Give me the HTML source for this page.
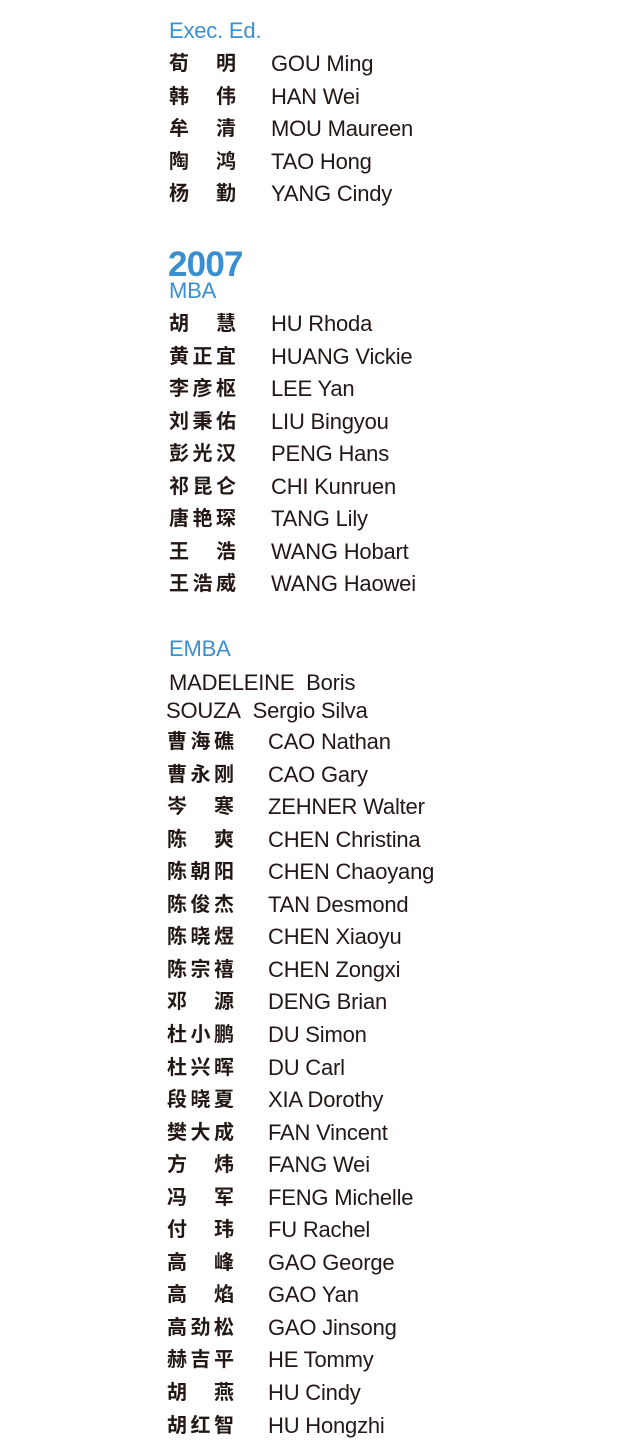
<!DOCTYPE html>
<html><head><meta charset="utf-8"><style>
body{margin:0;width:640px;height:1439px;background:#fff;position:relative;overflow:hidden;font-family:"Liberation Sans","Noto Sans CJK SC",sans-serif;color:#231815}
.r{position:absolute;height:28px;line-height:28px;white-space:nowrap}
.c{display:inline-block;width:67px;font-weight:bold;font-size:20px;text-align:justify;text-align-last:justify;font-family:"Noto Sans CJK SC",sans-serif;vertical-align:top}
.e{position:absolute;top:2px;font-size:22px;letter-spacing:-0.2px}
.h{position:absolute;color:#3a8fd0;font-size:22px;letter-spacing:-0.2px}
</style></head><body>
<div class="h" style="left:169px;top:18px">Exec. Ed.</div>
<div class="h" style="left:168px;top:245px;font-size:35px;font-weight:bold;letter-spacing:-0.8px">2007</div>
<div class="h" style="left:169px;top:278px">MBA</div>
<div class="h" style="left:169px;top:636px">EMBA</div>
<div class="r" style="left:169px;top:669px;font-size:22px;letter-spacing:-0.2px">MADELEINE&nbsp;&nbsp;Boris</div>
<div class="r" style="left:166px;top:697px;font-size:22px;letter-spacing:-0.2px">SOUZA&nbsp;&nbsp;Sergio Silva</div>
<script>
function rows(x,ex,y0,list){var h='';list.forEach(function(p,i){var y=y0+i*32.55-14;h+='<div class="r" style="left:'+x+'px;top:'+y+'px"><span class="c">'+p[0]+'</span><span class="e" style="left:'+(ex-x)+'px">'+p[1]+'</span></div>';});document.write(h);}
rows(169,271,62,[["荀明","GOU Ming"],["韩伟","HAN Wei"],["牟清","MOU Maureen"],["陶鸿","TAO Hong"],["杨勤","YANG Cindy"]]);
rows(169,271,322,[["胡慧","HU Rhoda"],["黄正宜","HUANG Vickie"],["李彦枢","LEE Yan"],["刘秉佑","LIU Bingyou"],["彭光汉","PENG Hans"],["祁昆仑","CHI Kunruen"],["唐艳琛","TANG Lily"],["王浩","WANG Hobart"],["王浩威","WANG Haowei"]]);
rows(167,268,740,[["曹海礁","CAO Nathan"],["曹永刚","CAO Gary"],["岑寒","ZEHNER Walter"],["陈爽","CHEN Christina"],["陈朝阳","CHEN Chaoyang"],["陈俊杰","TAN Desmond"],["陈晓煜","CHEN Xiaoyu"],["陈宗禧","CHEN Zongxi"],["邓源","DENG Brian"],["杜小鹏","DU Simon"],["杜兴晖","DU Carl"],["段晓夏","XIA Dorothy"],["樊大成","FAN Vincent"],["方炜","FANG Wei"],["冯军","FENG Michelle"],["付玮","FU Rachel"],["高峰","GAO George"],["高焰","GAO Yan"],["高劲松","GAO Jinsong"],["赫吉平","HE Tommy"],["胡燕","HU Cindy"],["胡红智","HU Hongzhi"]]);
</script>
</body></html>
